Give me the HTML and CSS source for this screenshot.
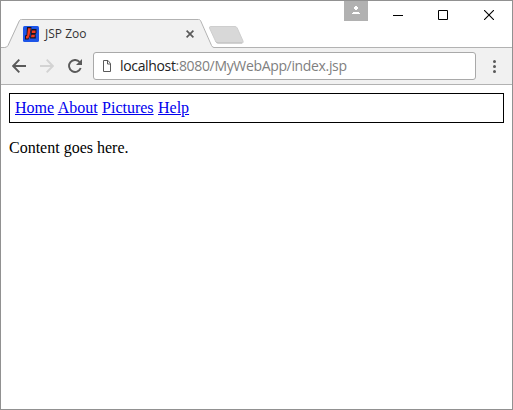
FILE: index.html
```html
<!DOCTYPE html>
<html lang="en">
<head>
<meta charset="utf-8">
<title>JSP Zoo</title>
<link rel="stylesheet" href="styles.css">
</head>
<body>
<div class="window">
  <header class="titlebar">
    <div class="tab">
      <svg class="tab-shape" width="213" height="29" viewBox="0 0 213 29"><path d="M0 29V28.500H3.500Q6 28.500 7 26.500L18 1.500Q18.500 .5 20 .5H197Q198.500 .5 199 1.500L210 26.500Q211 28.500 213 28.500V29Z" fill="#f1f1f1"/><path d="M0 28.500H3.500Q6 28.500 7 26.500L18.500 1.500Q19 .5 20.500 .5H197.500Q199 .5 199.500 1.500L210.500 26.500Q211.500 28.500 213 28.500" fill="none" stroke="#b2b2b2"/></svg>
      <svg class="favicon" width="16" height="16" viewBox="0 0 16 16"><rect width="16" height="16" rx="1.500" fill="#1d55e8"/><path d="M4 1H8.500L8 5L7 10L5.500 13.500H2V9.500L3.500 9Z" fill="#171421"/><path d="M8.500 3H13.500V7L12.500 8L12.800 12.500H7L8 7Z" fill="#171421"/><path d="M5 2.200H7.800L6.500 9.500L5.300 12.500H3V10.500L4.200 9.500Z" fill="#f33a20"/><path d="M9 4.500H12.500V7H8.700ZM8.500 8.800H11.900L11.600 11.300H8Z" fill="#f33a20"/></svg>
      <span class="tab-title">JSP Zoo</span>
      <svg class="tab-close" width="8" height="8" viewBox="0 0 8 8"><path d="M.6.6 7.400 7.400M7.400.6.6 7.400" stroke="#5a5a5a" stroke-width="1.700"/></svg>
    </div>
    <svg class="new-tab" width="37" height="18" viewBox="0 0 37 18"><path d="M3 .5H27Q28.500 .5 29.200 2L35 15Q35.700 17 34 17H10Q8.500 17 7.700 15.500L1.500 2Q1 .5 3 .5Z" fill="#d8d8d8" stroke="#cecece"/><path d="M7.700 15.500Q8.500 17 10 17H34" fill="none" stroke="#bdbdbd"/></svg>
    <div class="controls">
      <svg class="user" width="24" height="20" viewBox="0 0 24 20"><rect width="24" height="20" fill="#b1b1b1"/><path d="M11 5H13V6H14V8H13V9H11V8H10V6H11ZM9 11H15V12H16V13H8V12H9Z" fill="#fff"/></svg>
      <svg class="minimize" width="10" height="10" viewBox="0 0 10 10"><path d="M0 4.500H10" stroke="#000"/></svg>
      <svg class="maximize" width="10" height="10" viewBox="0 0 10 10"><path d="M.5.5H9.500V9.500H.5Z" fill="none" stroke="#000"/></svg>
      <svg class="close" width="10" height="10" viewBox="0 0 10 10"><path d="M0 0 10 10M10 0 0 10" stroke="#000" stroke-width="1.100"/></svg>
    </div>
  </header>
  <nav class="toolbar">
    <svg class="back" width="14" height="14" viewBox="0 0 14 14"><path d="M7.300.7 1.200 7 7.300 13.300M1.200 7H14" fill="none" stroke="#5a5a5a" stroke-width="1.900"/></svg>
    <svg class="forward" width="14" height="14" viewBox="0 0 14 14"><path d="M6.700.7 12.800 7 6.700 13.300M12.800 7H0" fill="none" stroke="#d3d3d3" stroke-width="1.900"/></svg>
    <svg class="reload" width="14" height="14" viewBox="0 0 14 14"><path d="M11.600 3A6 6 0 1 0 12.700 9" fill="none" stroke="#5a5a5a" stroke-width="1.900"/><path d="M14 0V6H8Z" fill="#5a5a5a"/></svg>
    <div class="address">
      <svg width="8" height="12" viewBox="0 0 8 12"><path d="M.5.5H5L7.500 3.500V11.500H.5ZM4.500.5V4H7.500" fill="none" stroke="#5a5a5a"/></svg>
      <span class="url"><span class="host">localhost</span>:8080/MyWebApp/index.jsp</span>
    </div>
    <svg class="menu" width="3" height="13" viewBox="0 0 3 13"><path d="M1.500 0a1.500 1.500 0 0 1 0 3a1.500 1.500 0 0 1 0-3M1.500 5a1.500 1.500 0 0 1 0 3a1.500 1.500 0 0 1 0-3M1.500 10a1.500 1.500 0 0 1 0 3a1.500 1.500 0 0 1 0-3" fill="#5a5a5a"/></svg>
  </nav>
  <main class="page">
    <div class="links"><a href="#">Home</a> <a href="#">About</a> <a href="#">Pictures</a> <a href="#">Help</a></div>
    <p>Content goes here.</p>
  </main>
</div>
</body>
</html>
```

FILE: styles.css
```css
* { box-sizing: border-box; }
body { margin: 0; background: #fff; overflow: hidden; }
svg { display: block; flex: none; }
.window { width: 513px; height: 410px; border: 1px solid #919191; }
.titlebar { display: flex; height: 47px; background: linear-gradient(#b2b2b2, #b2b2b2) bottom / 100% 1px no-repeat; }
.tab { position: relative; display: flex; align-items: center; width: 212px; height: 29px; margin-top: 18px; padding: 0 19px 0 22px; flex: none; }
.tab-shape { position: absolute; left: 0; top: 0; }
.favicon { position: relative; margin-right: 6px; }
.tab-title { position: relative; font: 12px/16px "Open Sans", sans-serif; letter-spacing: 0; color: #333; }
.tab-close { position: relative; margin-left: auto; }
.new-tab { margin: 25px 0 0 -5px; }
.controls { display: flex; margin-left: auto; }
.minimize { margin: 10px 0 0 25px; }
.maximize { margin: 9px 0 0 35px; }
.close { margin: 9px 18px 0 36px; }
.toolbar { display: flex; align-items: center; height: 37px; padding: 0 16px 0 11px; background: #f1f1f1; border-bottom: 1px solid #b2b2b2; }
.forward, .reload { margin-left: 14px; }
.address { display: flex; align-items: center; width: 383px; height: 28px; margin-left: 11px; padding-left: 9px; background: #fff; border: 1px solid #a9a9a9; border-radius: 3px; }
.url { margin-left: 9px; font: 14px/20px "Open Sans", sans-serif; letter-spacing: -0.34px; color: #808080; white-space: nowrap; }
.host { color: #222; }
.menu { margin-left: auto; }
.page { padding: 8px; font: 16px/18px "Liberation Serif", serif; color: #000; }
.links { height: 30px; padding: 5px; border: 1px solid #000; word-spacing: 0.4px; }
.links a { color: #00e; }
.page p { margin: 16px 0; }
```
